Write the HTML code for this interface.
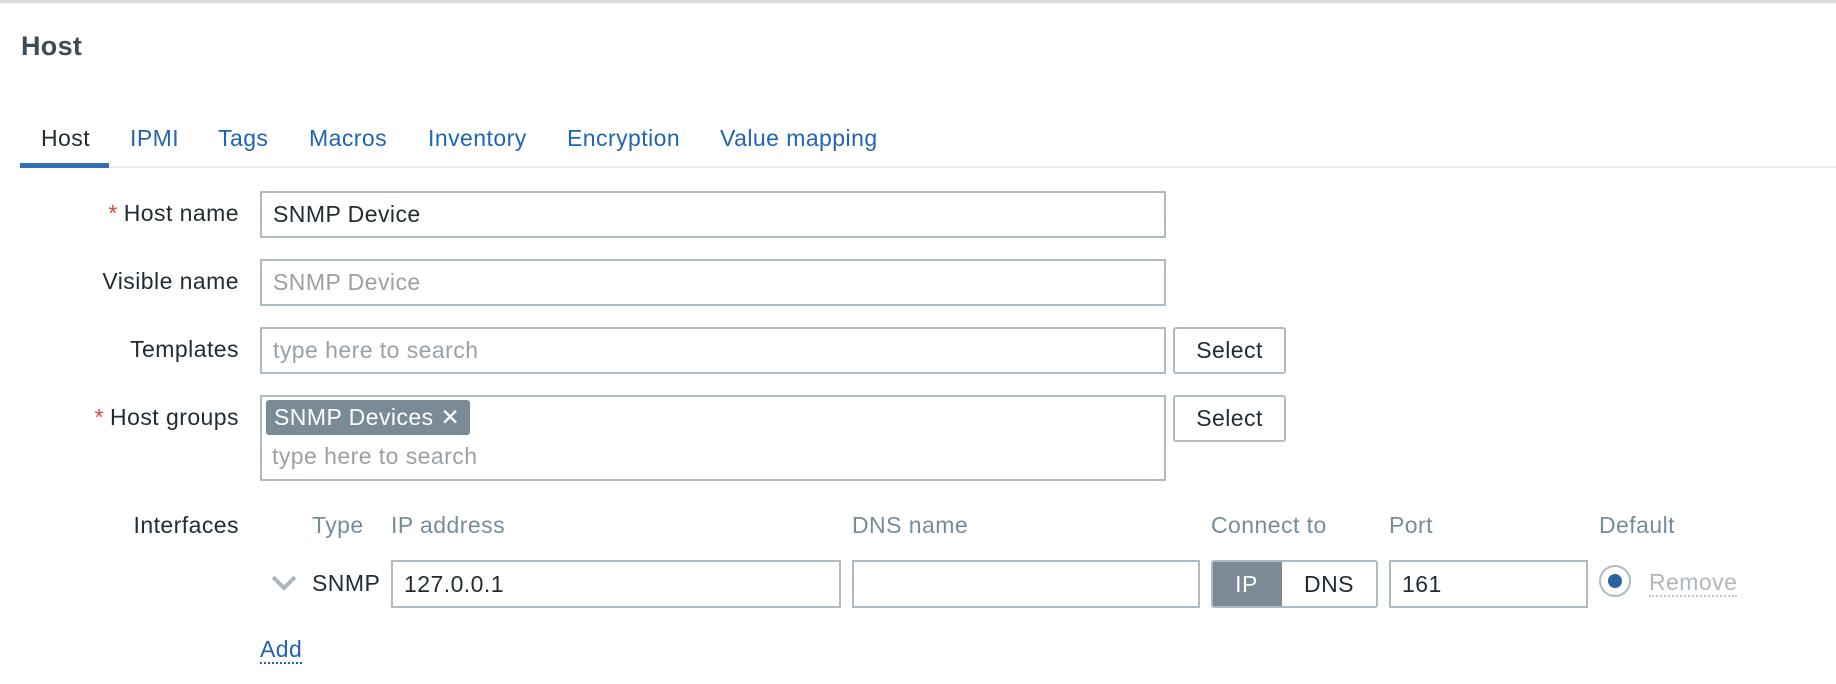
<!DOCTYPE html>
<html><head><meta charset="utf-8"><style>
*{box-sizing:border-box;margin:0;padding:0}
body{width:1836px;height:684px;background:#fff;font-family:"Liberation Sans",Arial,sans-serif;position:relative;overflow:hidden;color:#1f2c33;letter-spacing:0.45px}
.a{position:absolute;white-space:nowrap}
.top{left:0;top:0;width:1836px;height:3px;background:#d9dde0}
h1{position:absolute;left:21px;top:31px;font-size:27px;font-weight:bold;color:#3d4b56;letter-spacing:0.3px}
.tab{position:absolute;top:125px;font-size:23px;color:#1f65b1}
.ul{left:20px;top:163px;width:89px;height:5px;background:#3070b3}
.line{left:109px;top:166px;width:1727px;height:2px;background:#ebeef0}
.lbl{position:absolute;right:1597px;font-size:23px;color:#1f2c33;text-align:right}
.req{color:#d64541;margin-right:6px}
.inp{position:absolute;border:2px solid #aebbc3;background:#fff;font-size:23px;padding-left:11px;display:flex;align-items:center}
.ph{color:#9aa1a6}
.btn{position:absolute;border:2px solid #aebbc3;border-radius:3px;background:#fff;font-size:23px;display:flex;align-items:center;justify-content:center;width:113px;height:47px;left:1173px}
.hd{position:absolute;top:512px;font-size:23px;color:#768d99}
</style></head><body>
<div class="a top"></div>
<h1>Host</h1>
<div class="tab" style="left:41px;color:#1f2c33">Host</div>
<div class="tab" style="left:130px">IPMI</div>
<div class="tab" style="left:218px">Tags</div>
<div class="tab" style="left:309px">Macros</div>
<div class="tab" style="left:428px">Inventory</div>
<div class="tab" style="left:567px">Encryption</div>
<div class="tab" style="left:720px">Value mapping</div>
<div class="a ul"></div><div class="a line"></div>

<div class="lbl" style="top:200px"><span class="req">*</span>Host name</div>
<div class="inp" style="left:260px;top:191px;width:906px;height:47px">SNMP Device</div>
<div class="lbl" style="top:268px">Visible name</div>
<div class="inp ph" style="left:260px;top:259px;width:906px;height:47px">SNMP Device</div>
<div class="lbl" style="top:336px">Templates</div>
<div class="inp ph" style="left:260px;top:327px;width:906px;height:47px">type here to search</div>
<div class="btn" style="top:327px">Select</div>
<div class="lbl" style="top:404px"><span class="req">*</span>Host groups</div>
<div class="a" style="left:260px;top:395px;width:906px;height:86px;border:2px solid #aebbc3"></div>
<div class="a" style="left:266px;top:400px;width:204px;height:35px;background:#7a8a96;border-radius:3px;color:#fff;font-size:23px;padding:4px 0 0 8px">SNMP Devices <span style="margin-left:0">✕</span></div>
<div class="a ph" style="left:272px;top:443px;font-size:23px">type here to search</div>
<div class="btn" style="top:395px">Select</div>

<div class="lbl" style="top:512px">Interfaces</div>
<div class="hd" style="left:312px">Type</div>
<div class="hd" style="left:391px">IP address</div>
<div class="hd" style="left:852px">DNS name</div>
<div class="hd" style="left:1211px">Connect to</div>
<div class="hd" style="left:1389px">Port</div>
<div class="hd" style="left:1599px">Default</div>
<svg class="a" style="left:270px;top:574px" width="28" height="18"><path d="M3 3 L14 14 L25 3" stroke="#aab6be" stroke-width="4" fill="none"/></svg>
<div class="a" style="left:312px;top:570px;font-size:23px">SNMP</div>
<div class="inp" style="left:391px;top:560px;width:450px;height:48px">127.0.0.1</div>
<div class="inp" style="left:852px;top:560px;width:348px;height:48px"></div>
<div class="a" style="left:1211px;top:560px;width:167px;height:48px;border:2px solid #aebbc3;border-radius:3px;overflow:hidden;display:flex;font-size:23px">
<div style="width:71px;margin:-2px 0 -2px -2px;background:#7a8a96;color:#fff;display:flex;align-items:center;justify-content:center">IP</div>
<div style="flex:1;display:flex;align-items:center;justify-content:center">DNS</div></div>
<div class="inp" style="left:1389px;top:560px;width:199px;height:48px">161</div>
<div class="a" style="left:1599px;top:565px;width:32px;height:32px;border:2px solid #aebbc3;border-radius:50%;background:#fff"><div style="position:absolute;left:7px;top:7px;width:14px;height:14px;border-radius:50%;background:#2b63a0"></div></div>
<div class="a" style="left:1649px;top:569px;font-size:23px;color:#aeb8bf;border-bottom:2px dotted #c4ccd1;line-height:26px">Remove</div>
<div class="a" style="left:260px;top:636px;font-size:23px;color:#1f65b1;border-bottom:2px dotted #1f65b1;line-height:26px">Add</div>
</body></html>
